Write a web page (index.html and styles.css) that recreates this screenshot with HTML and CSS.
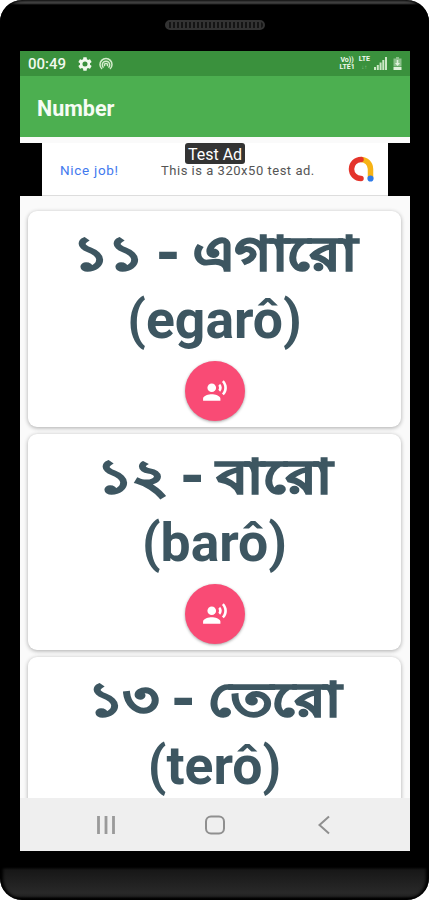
FILE: index.html
```html
<!DOCTYPE html>
<html lang="en">
  <head>
    <meta charset="UTF-8" />
    <meta name="viewport" content="width=device-width, initial-scale=1.0" />
    <title>Number</title>
    <link rel="stylesheet" href="styles.css">
  </head>
  <body>
    <div class="phone">
      <div class="speaker"></div>
      <div class="screen">
        <div class="status">
          <span class="time">00:49</span>
          <svg class="gear" width="14" height="14" viewBox="2 2 20 20" fill="#f1f9ee"><path d="M19.14 12.94c.04-.3.06-.61.06-.94s-.02-.64-.07-.94l2.03-1.58c.18-.14.23-.41.12-.61l-1.92-3.32c-.12-.22-.37-.29-.59-.22l-2.39.96c-.5-.38-1.03-.7-1.62-.94l-.36-2.54A.48.48 0 0 0 13.92 2.4h-3.84c-.24 0-.43.17-.47.41l-.36 2.54c-.59.24-1.13.57-1.62.94l-2.39-.96c-.22-.08-.47 0-.59.22L2.74 8.87c-.12.21-.08.47.12.61l2.03 1.58c-.05.3-.09.63-.09.94s.02.64.07.94l-2.03 1.58c-.18.14-.23.41-.12.61l1.92 3.32c.12.22.37.29.59.22l2.39-.96c.5.38 1.03.7 1.62.94l.36 2.54c.05.24.24.41.48.41h3.84c.24 0 .44-.17.47-.41l.36-2.54c.59-.24 1.13-.56 1.62-.94l2.39.96c.22.08.47 0 .59-.22l1.92-3.32c.12-.22.07-.47-.12-.61zM12 15.6A3.6 3.6 0 1 1 12 8.4a3.6 3.6 0 0 1 0 7.2z"/></svg>
          <svg class="cast" width="14" height="14" viewBox="0 0 14 14" fill="none" stroke="#d3eccb" stroke-width="1.5"><path d="M3 12A6 6 0 1 1 11 12M4.5 10.6A3.7 3.7 0 1 1 9.5 10.6M6 9A1.5 1.5 0 1 1 8 9"/></svg>
          <div class="signals">
            <span class="lte">Vo))<br>LTE1</span>
            <span class="lte">LTE<br><small>↓↑</small></span>
            <svg width="13" height="13" viewBox="0 0 13 13" fill="#cce8c6"><path d="M0 10h2v3H0zM2.8 8h2v5h-2zM5.6 5.5h2V13h-2zM8.3 3h2v10h-2zM11 0h2v13h-2z"/></svg>
            <svg class="battery" width="9" height="14" viewBox="0 0 9 14"><path d="M3 0h3v1.5h2.5v8h-8v-8H3z" fill="#8cc18b"/><path d="M3.7 3h1.6v3H7L4.5 9 2 6h1.7zM.5 10h8v3h-8z" fill="#dff1db"/></svg>
          </div>
        </div>
        <div class="appbar">Number</div>
        <div class="ad">
          <div class="ad-banner">
            <span class="ad-title">Nice job!</span>
            <span class="ad-text">This is a 320x50 test ad.</span>
            <svg class="ad-logo" width="28" height="28" viewBox="0 0 28 28" fill="none" stroke-width="5.5"><path d="M14 4.5A9.5 9.5 0 0 1 23.5 14v9" stroke="#f7b315"/><path d="M14 4.5A9.5 9.5 0 1 0 14 23.5" stroke="#e4342b" stroke-linecap="round"/><circle cx="23.5" cy="23.5" r="3.1" fill="#2f7be8"/></svg>
            <span class="ad-label">Test Ad</span>
          </div>
        </div>
        <div class="list">
          <div class="card">
            <div class="bengali" lang="bn">১১ - এগারো</div>
            <div class="latin">(egarô)</div>
            <div class="speak">
              <svg width="26" height="26" viewBox="0 0 24 24" fill="#fff"><circle cx="9" cy="9" r="4"/><path d="M9 15c-2.67 0-8 1.34-8 4v2h16v-2c0-2.66-5.33-4-8-4zM16.76 5.36l-1.68 1.69c.84 1.18.84 2.71 0 3.89l1.68 1.69c2.02-2.02 2.02-5.07 0-7.27zM20.07 2l-1.63 1.63c2.77 3.02 2.77 7.56 0 10.74L20.07 16c3.9-3.89 3.91-9.95 0-14z"/></svg>
            </div>
          </div>
          <div class="card">
            <div class="bengali" lang="bn">১২ - বারো</div>
            <div class="latin">(barô)</div>
            <div class="speak">
              <svg width="26" height="26" viewBox="0 0 24 24" fill="#fff"><circle cx="9" cy="9" r="4"/><path d="M9 15c-2.67 0-8 1.34-8 4v2h16v-2c0-2.66-5.33-4-8-4zM16.76 5.36l-1.68 1.69c.84 1.18.84 2.71 0 3.89l1.68 1.69c2.02-2.02 2.02-5.07 0-7.27zM20.07 2l-1.63 1.63c2.77 3.02 2.77 7.56 0 10.74L20.07 16c3.9-3.89 3.91-9.95 0-14z"/></svg>
            </div>
          </div>
          <div class="card">
            <div class="bengali" lang="bn">১৩ - তেরো</div>
            <div class="latin">(terô)</div>
          </div>
        </div>
        <div class="navbar">
          <svg width="20" height="20" viewBox="0 0 20 20" stroke="#9a9a9a" stroke-width="2.8"><path d="M2.5 1v18M10 1v18M17.5 1v18"/></svg>
          <svg width="20" height="20" viewBox="0 0 20 20" fill="none" stroke="#8f8f8f" stroke-width="2"><rect x="1" y="1.5" width="18" height="17" rx="5"/></svg>
          <svg width="20" height="20" viewBox="0 0 20 20" fill="none" stroke="#8f8f8f" stroke-width="2"><path d="M15 1.5L5.5 10l9.5 8.5"/></svg>
        </div>
      </div>
    </div>
  </body>
</html>
```
FILE: styles.css
```css
body {
  margin: 0;
  background-color: #fff;
  font-family: Roboto, "Noto Sans", sans-serif;
}
.phone {
  box-sizing: border-box;
  width: 429px;
  height: 900px;
  padding: 20px 19px 49px 20px;
  border-radius: 22px;
  background: linear-gradient(#444 0, #444 3px, #000 5px, #000 867px, #171717 870px, #292929 893px, #222 896px, #000 899px);
  box-shadow: inset 3px 0 3px #000, inset -3px 0 3px #000;
}
.speaker {
  box-sizing: border-box;
  width: 100px;
  height: 10px;
  margin: 0 auto 21px;
  border: 2px solid #333;
  border-radius: 5px;
  background: repeating-linear-gradient(90deg, #333 0 2px, #151515 2px 4px);
}
.screen {
  display: flex;
  flex-direction: column;
  height: 800px;
  overflow: hidden;
  background-color: #fafafa;
}
.status {
  display: flex;
  align-items: center;
  flex: none;
  height: 25px;
  padding: 0 8px;
  background-color: #3a913d;
  color: #f1f9ee;
}
.time {
  width: 39px;
  padding-top: 1px;
  font-size: 15px;
  font-weight: 500;
}
.gear {
  margin-left: 11px;
}
.cast {
  margin-left: 7px;
}
.signals {
  display: flex;
  align-items: center;
  gap: 4px;
  margin-left: auto;
}
.lte {
  font-size: 7px;
  font-weight: bold;
  line-height: 7px;
  text-align: center;
}
.lte small {
  font-size: 6px;
  color: #8cc18b;
}
.battery {
  margin-left: 2px;
}
.appbar {
  flex: none;
  height: 61px;
  padding-left: 17px;
  background-color: #4caf50;
  color: #f6fcf4;
  font-size: 21.5px;
  font-weight: bold;
  line-height: 65px;
}
.ad {
  flex: none;
  height: 53px;
  margin: 6px 0 1px;
  padding: 0 22px;
  background-color: #000;
}
.ad-banner {
  position: relative;
  display: flex;
  align-items: center;
  box-sizing: border-box;
  height: 53px;
  border-bottom: 1px solid #ddd;
  background-color: #fff;
}
.ad-title {
  width: 101px;
  padding-left: 18px;
  padding-top: 2px;
  color: #4279ee;
  font-size: 13.5px;
  letter-spacing: 0.7px;
}
.ad-text {
  width: 186px;
  padding-top: 2px;
  color: #555;
  font-size: 13px;
  letter-spacing: 0.52px;
  white-space: nowrap;
}
.ad-label {
  position: absolute;
  top: 0;
  left: 143px;
  width: 60px;
  height: 21px;
  border-radius: 3px;
  background-color: #333;
  color: #fff;
  font-size: 16px;
  line-height: 23px;
  text-align: center;
}
.list {
  display: flex;
  flex-direction: column;
  box-sizing: border-box;
  flex: none;
  gap: 7px;
  height: 601px;
  padding: 14px 9px 0 8px;
  overflow: hidden;
}
.card {
  box-sizing: border-box;
  flex: none;
  height: 216px;
  padding-top: 8px;
  border-radius: 9px;
  background-color: #fff;
  box-shadow: 0 1px 4px rgba(0, 0, 0, 0.32);
  color: #3d5661;
  text-align: center;
  white-space: nowrap;
}
.bengali {
  height: 69px;
  font-size: 56px;
  font-weight: bold;
  line-height: 70px;
  -webkit-text-stroke: 2.4px #3d5661;
  transform: scale(0.985, 0.84);
}
.latin {
  height: 65px;
  font-size: 53.5px;
  font-weight: bold;
  line-height: 63px;
}
.speak {
  display: flex;
  align-items: center;
  justify-content: center;
  width: 60px;
  height: 60px;
  margin: 8px auto 0;
  border-radius: 50%;
  background-color: #f94b75;
  box-shadow: 0 1px 3px rgba(0, 0, 0, 0.35);
}
.navbar {
  display: flex;
  align-items: center;
  justify-content: center;
  gap: 89px;
  flex: none;
  height: 53px;
  background-color: #efefef;
}
```
